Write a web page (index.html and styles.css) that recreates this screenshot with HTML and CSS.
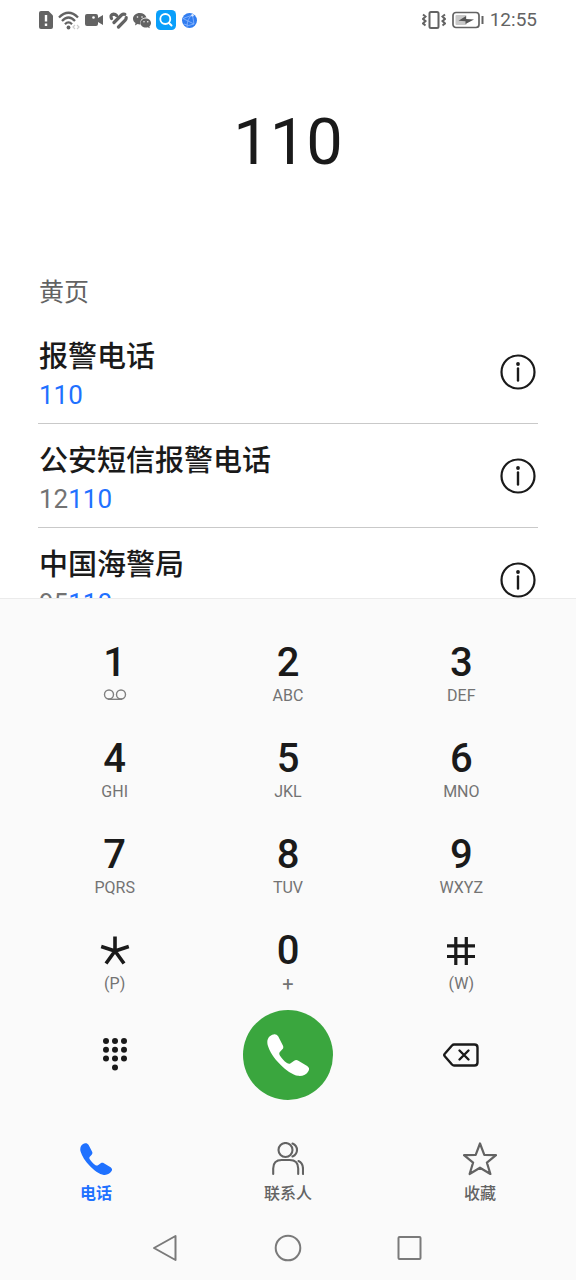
FILE: index.html
```html
<!DOCTYPE html>
<html lang="zh-CN">
<head>
<meta charset="utf-8">
<meta name="viewport" content="width=device-width, initial-scale=1">
<title>电话</title>
<link rel="stylesheet" href="styles.css">
</head>
<body>
<div class="phone">
  <header class="status">
    <div class="status-icons">
      <svg width="14" height="18" viewBox="0 0 14 18"><path fill="#636363" d="M2 0h7.500L14 4.500V16a2 2 0 0 1-2 2H2a2 2 0 0 1-2-2V2a2 2 0 0 1 2-2z"/><path stroke="#fff" stroke-width="2.400" d="M7 4v6.500M7 12.500v2.400"/></svg>
      <svg width="22" height="19" viewBox="0 0 22 19" fill="none"><g stroke="#636363" stroke-width="2.300"><path d="M1 6.500Q10.500-3 20 6.500M4 10Q10.500 3 17 10M7 13.200Q10.500 9.600 14 13.200"/></g><circle cx="10.500" cy="16.500" r="1.900" fill="#636363"/><path stroke="#ccc" stroke-width="1.200" d="M17 14l-2 2 2 2M19 14l2 2-2 2"/></svg>
      <svg width="19" height="14" viewBox="0 0 19 14"><path fill="#636363" d="M2 1h9a2 2 0 0 1 2 2v2l5-3v10l-5-3v2a2 2 0 0 1-2 2H2a2 2 0 0 1-2-2V3a2 2 0 0 1 2-2z"/><circle cx="8.500" cy="4.500" r="1.300" fill="#fff"/></svg>
      <svg width="19" height="17" viewBox="0 0 19 17" fill="none" stroke="#636363" stroke-width="3.200" stroke-linecap="round"><path d="M2.500 6.500Q1 2.500 4.500 2.200q2 0 3 1.300M5 10.500L12.500 3Q14 1.800 15.800 2.300M9.500 15L16 8.500Q17.300 7 17.200 5.500"/></svg>
      <svg width="18" height="17" viewBox="0 0 18 17"><path fill="#636363" d="M6.800 1C3 1 0 3.500 0 6.700c0 1.800 1 3.400 2.500 4.400L2 13.400l2.500-1.300q1.500.4 3 .3C6.500 8 9.500 5.500 13.500 5.500 12.800 2.800 10 1 6.800 1z"/><path fill="#636363" d="M12.800 6.500C9.800 6.500 7.500 8.500 7.500 11s2.300 4.500 5.300 4.500q1 0 2-.3l2 1-.5-1.800C17.500 13.500 18 12.300 18 11c0-2.500-2.200-4.500-5.200-4.500z"/><g fill="#fff"><circle cx="4.500" cy="5" r=".8"/><circle cx="9" cy="5" r=".8"/><circle cx="11" cy="9.800" r=".7"/><circle cx="14.800" cy="9.800" r=".7"/></g></svg>
      <svg width="20" height="20" viewBox="0 0 20 20" fill="none"><rect width="20" height="20" rx="4.500" fill="#0a9ffa"/><circle cx="9.300" cy="9" r="5" stroke="#fff" stroke-width="1.800"/><path stroke="#fff" stroke-width="2" stroke-linecap="round" d="M13 13l2.500 2.500"/></svg>
      <svg width="17" height="17" viewBox="0 0 17 17" fill="none"><circle cx="8.500" cy="8.500" r="7.500" fill="#317df0"/><path stroke="#8fbaff" stroke-width=".8" d="M2 6.500L11.500 3 13 12 2 6.500M3 12q4 3 10 0M11.500 3Q6 6 6 15"/><circle cx="11.500" cy="3.300" r="1.200" fill="#dceaff"/></svg>
    </div>
    <div class="status-right">
      <svg width="24" height="18" viewBox="0 0 24 18" fill="none" stroke="#636363"><rect x="7.500" y="1" width="9" height="16" rx="1.500" stroke-width="2"/><path stroke-width="2" d="M1 3.500l2.500 2L1 8l2.500 2L1 12.500l2.500 2M23 3.500l-2.500 2L23 8l-2.500 2 2.500 2.500-2.500 2"/></svg>
      <svg width="32" height="18" viewBox="0 0 32 18"><rect x="1" y="1.500" width="26" height="15" rx="3" fill="none" stroke="#636363" stroke-width="1.700"/><rect x="3.500" y="4" width="11" height="10" rx="1" fill="#c8c8c8"/><path fill="#555" d="M6.500 9.800L14 5v3l8 .5-8.500 4.500v-2.700z"/><path stroke="#636363" stroke-width="2" d="M30.500 5v8"/></svg>
      <time>12:55</time>
    </div>
  </header>

  <output class="dialed">110</output>

  <main class="results">
    <h1>黄页</h1>
    <ul>
      <li>
        <div><p class="name">报警电话</p><p class="number"><mark>110</mark></p></div>
        <button class="info" aria-label="详情"><svg width="36" height="36" viewBox="0 0 36 36" fill="none" stroke="#1a1a1a"><circle cx="18" cy="18" r="16.500" stroke-width="2.200"/><path stroke-width="2.400" stroke-linecap="round" d="M18 14.500v12"/><circle cx="18" cy="10" r="1.900" fill="#1a1a1a" stroke="none"/></svg></button>
      </li>
      <li>
        <div><p class="name">公安短信报警电话</p><p class="number">12<mark>110</mark></p></div>
        <button class="info" aria-label="详情"><svg width="36" height="36" viewBox="0 0 36 36" fill="none" stroke="#1a1a1a"><circle cx="18" cy="18" r="16.500" stroke-width="2.200"/><path stroke-width="2.400" stroke-linecap="round" d="M18 14.500v12"/><circle cx="18" cy="10" r="1.900" fill="#1a1a1a" stroke="none"/></svg></button>
      </li>
      <li>
        <div><p class="name">中国海警局</p><p class="number">95<mark>110</mark></p></div>
        <button class="info" aria-label="详情"><svg width="36" height="36" viewBox="0 0 36 36" fill="none" stroke="#1a1a1a"><circle cx="18" cy="18" r="16.500" stroke-width="2.200"/><path stroke-width="2.400" stroke-linecap="round" d="M18 14.500v12"/><circle cx="18" cy="10" r="1.900" fill="#1a1a1a" stroke="none"/></svg></button>
      </li>
    </ul>
  </main>

  <section class="panel">
    <div class="keys">
      <button><b>1</b><span><svg width="24" height="14" viewBox="0 0 24 14" fill="none" stroke="#808080" stroke-width="1.400"><circle cx="6" cy="5.500" r="4.500"/><circle cx="18" cy="5.500" r="4.500"/><path d="M5 10.300h14"/></svg></span></button>
      <button><b>2</b><span>ABC</span></button>
      <button><b>3</b><span>DEF</span></button>
      <button><b>4</b><span>GHI</span></button>
      <button><b>5</b><span>JKL</span></button>
      <button><b>6</b><span>MNO</span></button>
      <button><b>7</b><span>PQRS</span></button>
      <button><b>8</b><span>TUV</span></button>
      <button><b>9</b><span>WXYZ</span></button>
      <button aria-label="星号"><b><svg width="30" height="30" viewBox="0 0 30 30" fill="none" stroke="#1a1a1a" stroke-width="3.600"><path d="M15 .500V15M1.200 10.500L15 15l13.800-4.500M15 15L6 27.500M15 15l9 12.500"/></svg></b><span>(P)</span></button>
      <button><b>0</b><span class="plus">+</span></button>
      <button aria-label="井号"><b><svg width="30" height="30" viewBox="0 0 30 30" fill="none" stroke="#1a1a1a" stroke-width="3.200"><path d="M9.800 1v28M20.300 1v28M1 9.800h28M1 20.500h28"/></svg></b><span>(W)</span></button>
    </div>

    <div class="actions">
      <button aria-label="收起键盘"><svg width="26" height="34" viewBox="0 0 26 34" fill="#1a1a1a"><circle cx="4" cy="3" r="3"/><circle cx="13" cy="3" r="3"/><circle cx="22" cy="3" r="3"/><circle cx="4" cy="11.800" r="3"/><circle cx="13" cy="11.800" r="3"/><circle cx="22" cy="11.800" r="3"/><circle cx="4" cy="20.600" r="3"/><circle cx="13" cy="20.600" r="3"/><circle cx="22" cy="20.600" r="3"/><circle cx="13" cy="29.400" r="3"/></svg></button>
      <button class="call" aria-label="拨打"><svg width="42" height="42" viewBox="0 0 32 32" fill="#fff"><path d="M5 .3C6.500 0 7.600.5 8.500 1.800L12 8.500c.7 1.400.5 2.300-.3 3.200L9.800 13.800c-.7.8-.5 1.600 0 2.500 1.300 2.200 3.200 4.200 5.400 5.700 1 .7 1.900.8 2.800.2l2.700-1.900c1-.6 2.100-.6 3.200 0l6.700 4c1.500 1 1.800 2.300 1 3.800-1.400 2.700-4.600 4.200-7.800 3.800-4.300-.7-9.700-4.500-13.700-8.700C5.200 18.300 1.800 13 .5 8.300-.5 4.300 1.500.8 5 .3z"/></svg></button>
      <button aria-label="删除"><svg width="36" height="24" viewBox="0 0 36 24" fill="none" stroke="#1a1a1a" stroke-width="2.400" stroke-linecap="round" stroke-linejoin="round"><path d="M11 1.500h20.500q3 0 3 3v15q0 3-3 3H11q-1 0-2-1L2 13.500q-1.500-1.500 0-3L9 2.500q1-1 2-1z"/><path d="M16.500 7.500l9 9M25.500 7.500l-9 9"/></svg></button>
    </div>

    <nav class="tabs">
      <a class="active" href="#phone"><svg width="32" height="32" viewBox="0 0 32 32" fill="#1f71ff"><path d="M5 .3C6.500 0 7.600.5 8.500 1.800L12 8.500c.7 1.400.5 2.300-.3 3.200L9.800 13.800c-.7.8-.5 1.600 0 2.500 1.300 2.200 3.200 4.200 5.400 5.700 1 .7 1.900.8 2.800.2l2.700-1.900c1-.6 2.100-.6 3.200 0l6.700 4c1.500 1 1.800 2.300 1 3.800-1.400 2.700-4.600 4.200-7.800 3.800-4.300-.7-9.700-4.500-13.700-8.700C5.200 18.300 1.800 13 .5 8.300-.5 4.300 1.500.8 5 .3z"/></svg>电话</a>
      <a href="#contacts"><svg width="32" height="34" viewBox="0 0 32 34" fill="none" stroke="#636363" stroke-width="2.100" stroke-linecap="round"><circle cx="13.500" cy="8" r="7"/><path d="M20.500 1.500Q25 3.500 25 8T20.500 14.500M1.200 32V26.500q0-8.500 8.500-8.500h8q8.500 0 8.500 8.500V32M26.500 19q4.500 2 4.500 8v5"/></svg>联系人</a>
      <a href="#favorites"><svg width="34" height="34" viewBox="0 0 34 34" fill="none" stroke="#636363" stroke-width="2.200" stroke-linejoin="round"><path d="M17 1.500l4.300 11.300 11.700.4-9.100 7.400 3.500 11.400L17 25.700 6.600 32l3.500-11.400L1 13.200l11.700-.4z"/></svg>收藏</a>
    </nav>

    <div class="system-nav">
      <button aria-label="返回"><svg width="28" height="28" viewBox="0 0 28 28" fill="none" stroke="#7a7a7a" stroke-width="2" stroke-linejoin="round"><path d="M23.500 2v24L2 14z"/></svg></button>
      <button aria-label="主页"><svg width="28" height="28" viewBox="0 0 28 28" fill="none" stroke="#7a7a7a" stroke-width="2"><circle cx="14" cy="14" r="12.300"/></svg></button>
      <button aria-label="最近任务"><svg width="28" height="28" viewBox="0 0 28 28" fill="none" stroke="#7a7a7a" stroke-width="2"><rect x="2.500" y="3" width="22" height="22" rx="1"/></svg></button>
    </div>
  </section>
</div>
</body>
</html>
```

FILE: styles.css
```css
* {
  box-sizing: border-box;
  margin: 0;
  padding: 0;
}

body {
  background: #fff;
  color: #1a1a1a;
  font-family: Roboto, "Noto Sans CJK SC", sans-serif;
}

button {
  border: 0;
  background: none;
  color: inherit;
  font: inherit;
  cursor: pointer;
}

svg {
  display: block;
  flex: none;
}

.phone {
  display: flex;
  flex-direction: column;
  height: 100vh;
}

.status {
  display: flex;
  align-items: center;
  justify-content: space-between;
  height: 40px;
  padding: 0 39px;
}

.status-icons {
  display: flex;
  align-items: center;
  gap: 5px;
}

.status-right {
  display: flex;
  align-items: center;
  gap: 6px;
  color: #636363;
  font-size: 19px;
  line-height: 24px;
}

.dialed {
  padding: 60px 40px;
  font-size: 65px;
  line-height: 84px;
  text-align: center;
}

.results {
  flex: 1 1 0;
  min-height: 0;
  padding: 34px 38px 0;
  overflow: hidden;
}

.results h1 {
  height: 42px;
  padding-left: 1px;
  color: #636363;
  font-size: 25px;
  font-weight: 400;
  line-height: 30px;
}

.results ul {
  list-style: none;
}

.results li {
  display: flex;
  align-items: center;
  justify-content: space-between;
  height: 104px;
  padding: 0 2px 0 1px;
  border-bottom: 1px solid #c9c9c9;
}

.results li > div {
  padding-top: 6px;
}

.name {
  font-size: 29px;
  font-weight: 500;
  line-height: 40px;
}

.number {
  color: #737373;
  font-size: 26px;
  line-height: 36px;
}

.number mark {
  background: none;
  color: #1f71ff;
}

.panel {
  border-top: 1px solid #ebebeb;
  background: #fafafa;
}

.keys,
.actions {
  display: grid;
  grid-template-columns: repeat(3, 1fr);
  padding: 0 28px;
}

.keys {
  padding-top: 27px;
}

.keys button {
  display: flex;
  flex-direction: column;
  align-items: center;
  height: 96px;
  padding-top: 16px;
}

.keys b {
  display: flex;
  align-items: center;
  height: 42px;
  font-size: 40px;
  font-weight: 500;
  line-height: 42px;
}

.keys span {
  display: flex;
  align-items: center;
  height: 24px;
  color: #737373;
  font-size: 16px;
  line-height: 24px;
}

.keys .plus {
  font-size: 20px;
}

.actions {
  align-items: center;
  justify-items: center;
  height: 90px;
}

.actions .call {
  display: flex;
  align-items: center;
  justify-content: center;
  width: 90px;
  height: 90px;
  border-radius: 50%;
  background: #3aa63e;
}

.tabs {
  display: grid;
  grid-template-columns: repeat(3, 1fr);
  height: 116px;
  padding-top: 40px;
}

.tabs a {
  display: grid;
  grid-template-rows: 38px 32px;
  place-items: center;
  color: #636363;
  font-size: 16px;
  font-weight: 500;
  line-height: 24px;
  text-decoration: none;
}

.tabs .active {
  color: #1f71ff;
  font-weight: 700;
}

.system-nav {
  display: grid;
  grid-template-columns: repeat(3, 1fr);
  justify-items: center;
  align-items: center;
  height: 64px;
  padding: 0 105px;
}
```
